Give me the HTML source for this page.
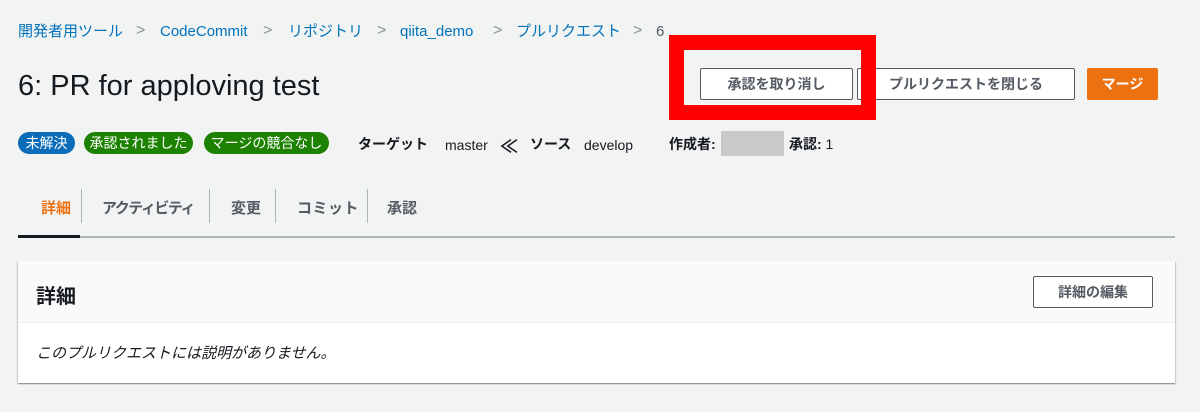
<!DOCTYPE html>
<html><head><meta charset="utf-8"><style>
*{margin:0;padding:0;box-sizing:border-box}
body{width:1200px;height:412px;background:#f2f3f3;font-family:"Liberation Sans","Noto Sans CJK JP",sans-serif;position:relative;overflow:hidden;color:#16191f}
.a{position:absolute;white-space:nowrap}
.bc{top:20px;font-size:15px;color:#0073bb}
.l{top:23px}
.sep{color:#879596;font-size:16px;top:22px}
.btn{position:absolute;top:68px;height:32px;border:1px solid #545b64;border-radius:2px;background:#fff;font-size:14px;font-weight:bold;color:#545b64;display:flex;align-items:center;justify-content:center}
.badge{position:absolute;top:132px;height:22px;border-radius:11px;color:#fff;font-size:14px;line-height:22px;text-align:center}
.tab{position:absolute;top:197px;font-size:15px;font-weight:bold;color:#545b64}
.vs{position:absolute;top:189px;width:1px;height:34px;background:#aab7b8}
.m{position:absolute;top:134px;font-size:14px}
.ml{top:137px}
</style></head><body>
<div class="a bc" style="left:18px">開発者用ツール</div>
<div class="a bc sep" style="left:136px">&gt;</div>
<div class="a bc l" style="left:160px">CodeCommit</div>
<div class="a bc sep" style="left:263px">&gt;</div>
<div class="a bc" style="left:288px">リポジトリ</div>
<div class="a bc sep" style="left:377px">&gt;</div>
<div class="a bc l" style="left:400px">qiita_demo</div>
<div class="a bc sep" style="left:493px">&gt;</div>
<div class="a bc" style="left:516px">プルリクエスト</div>
<div class="a bc sep" style="left:633px">&gt;</div>
<div class="a bc l" style="left:656px;color:#545b64">6</div>

<div class="a" style="left:18px;top:70px;font-size:29px;color:#16191f">6: PR for apploving test</div>

<div class="btn" style="left:700px;width:153px">承認を取り消し</div>
<div class="btn" style="left:857px;width:218px">プルリクエストを閉じる</div>
<div class="btn" style="left:1087px;width:71px;background:#ec7211;border-color:#ec7211;color:#fff">マージ</div>
<div class="a" style="left:669px;top:35px;width:207px;height:85px;border:15px solid #ff0000"></div>

<div class="badge" style="left:18px;width:57px;background:#0b6cb8">未解決</div>
<div class="badge" style="left:84px;width:109px;background:#1d8102">承認されました</div>
<div class="badge" style="left:204px;width:125px;background:#1d8102">マージの競合なし</div>
<div class="m" style="left:358px;font-weight:bold">ターゲット</div>
<div class="m ml" style="left:445px">master</div>
<div class="m" style="left:500px;top:133px;font-size:18px;font-weight:bold">≪</div>
<div class="m" style="left:530px;font-weight:bold">ソース</div>
<div class="m ml" style="left:584px">develop</div>
<div class="m" style="left:669px;font-weight:bold">作成者:</div>
<div class="a" style="left:721px;top:131px;width:63px;height:25px;background:#c9c9c9"></div>
<div class="m" style="left:789px"><b>承認:</b> 1</div>

<div class="tab" style="left:41px;color:#ec7211">詳細</div>
<div class="vs" style="left:81px"></div>
<div class="tab" style="left:102px;letter-spacing:-1.5px">アクティビティ</div>
<div class="vs" style="left:209px"></div>
<div class="tab" style="left:231px">変更</div>
<div class="vs" style="left:275px"></div>
<div class="tab" style="left:297px;letter-spacing:0.5px">コミット</div>
<div class="vs" style="left:367px"></div>
<div class="tab" style="left:387px">承認</div>
<div class="a" style="left:18px;top:236px;width:1157px;height:2px;background:#aab7b8"></div>
<div class="a" style="left:18px;top:235px;width:62px;height:3px;background:#16191f"></div>

<div class="a" style="left:18px;top:261px;width:1157px;height:122px;background:#fff;box-shadow:0 1px 1px 0 rgba(0,28,36,.3),1px 1px 1px 0 rgba(0,28,36,.15),-1px 1px 1px 0 rgba(0,28,36,.15)">
<div style="height:62px;background:#fafafa;border-bottom:1px solid #eaeded;position:relative">
<div class="a" style="left:18px;top:19px;font-size:20px;font-weight:bold">詳細</div>
<div class="btn" style="left:1015px;top:15px;width:120px">詳細の編集</div>
</div>
<div class="a" style="left:18px;top:81px;font-size:15px;font-style:italic">このプルリクエストには説明がありません。</div>
</div>
</body></html>
